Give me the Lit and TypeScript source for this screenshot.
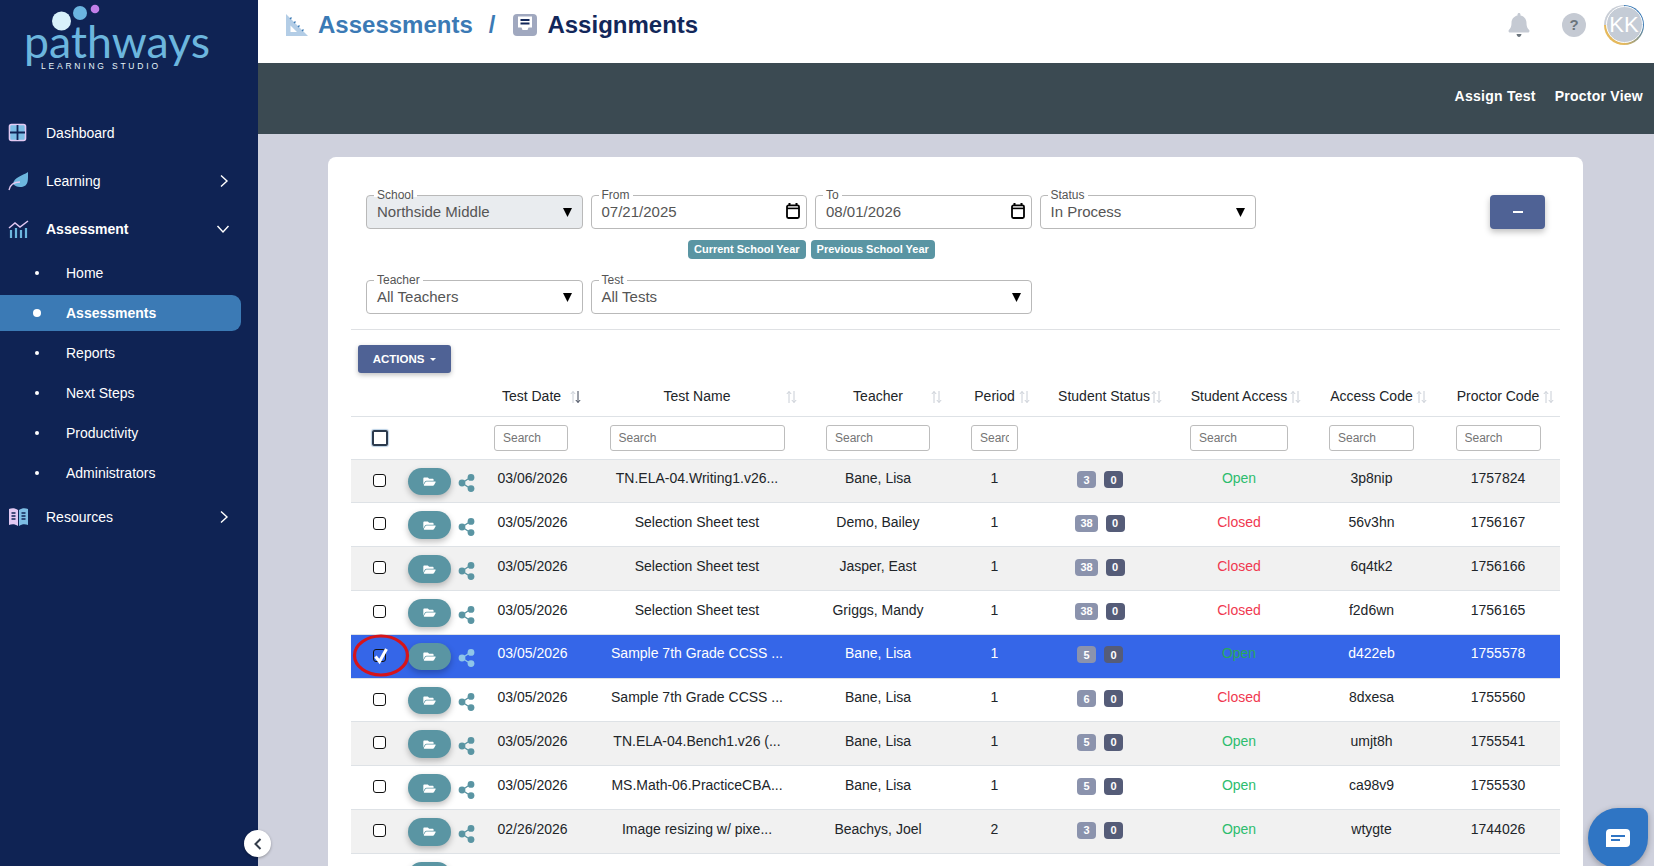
import { LitElement, html, css, svg } from "lit";
import { customElement } from "lit/decorators.js";

interface Row { date: string; name: string; teacher: string; period: string; a: string; access: string; code: string; proctor: string; }
const rows: Row[] = [
  { date: "03/06/2026", name: "TN.ELA-04.Writing1.v26...", teacher: "Bane, Lisa", period: "1", a: "3", access: "Open", code: "3p8nip", proctor: "1757824" },
  { date: "03/05/2026", name: "Selection Sheet test", teacher: "Demo, Bailey", period: "1", a: "38", access: "Closed", code: "56v3hn", proctor: "1756167" },
  { date: "03/05/2026", name: "Selection Sheet test", teacher: "Jasper, East", period: "1", a: "38", access: "Closed", code: "6q4tk2", proctor: "1756166" },
  { date: "03/05/2026", name: "Selection Sheet test", teacher: "Griggs, Mandy", period: "1", a: "38", access: "Closed", code: "f2d6wn", proctor: "1756165" },
  { date: "03/05/2026", name: "Sample 7th Grade CCSS ...", teacher: "Bane, Lisa", period: "1", a: "5", access: "Open", code: "d422eb", proctor: "1755578" },
  { date: "03/05/2026", name: "Sample 7th Grade CCSS ...", teacher: "Bane, Lisa", period: "1", a: "6", access: "Closed", code: "8dxesa", proctor: "1755560" },
  { date: "03/05/2026", name: "TN.ELA-04.Bench1.v26 (...", teacher: "Bane, Lisa", period: "1", a: "5", access: "Open", code: "umjt8h", proctor: "1755541" },
  { date: "03/05/2026", name: "MS.Math-06.PracticeCBA...", teacher: "Bane, Lisa", period: "1", a: "5", access: "Open", code: "ca98v9", proctor: "1755530" },
  { date: "02/26/2026", name: "Image resizing w/ pixe...", teacher: "Beachys, Joel", period: "2", a: "3", access: "Open", code: "wtygte", proctor: "1744026" },
];

const headers = [
  { t: "Test Date", search: 74, right: 9, active: true },
  { t: "Test Name", search: 175, right: 7, active: false },
  { t: "Teacher", search: 104, right: 10, active: false },
  { t: "Period", search: 47, right: 7, active: false },
  { t: "Student Status", search: 0, right: 9, active: false },
  { t: "Student Access", search: 98, right: 6, active: false },
  { t: "Access Code", search: 85, right: 9, active: false },
  { t: "Proctor Code", search: 85, right: 6, active: false },
];

const chevronRight = html`<svg class="chev" width="12" height="14" viewBox="0 0 12 14"><path d="M3 1.500 9 7l-6 5.500" fill="none" stroke="#fff" stroke-width="1.400"/></svg>`;
const chevronDown = html`<svg class="chev" width="14" height="12" viewBox="0 0 14 12"><path d="M1.500 3 7 9l5.500-6" fill="none" stroke="#fff" stroke-width="1.400"/></svg>`;

const icons = {
  dash: html`<svg width="20" height="20" viewBox="0 0 20 20"><rect x="1.500" y="1.500" width="16" height="16" rx="2" fill="#7dbde4" stroke="#e3c9f2" stroke-width="1.600"/><path d="M9.500 2v15M2 9.500h15" stroke="#0f2354" stroke-width="1.800"/></svg>`,
  leaf: html`<svg width="22" height="20" viewBox="0 0 22 20"><path d="M20 1c0 8 1 15-8 15-3 0-5-1-7-3C6 6 14 5 20 1z" fill="#6cb6de"/><path d="M1 19c1-5 4-8 11-8" fill="none" stroke="#e3c9f2" stroke-width="1.300"/></svg>`,
  chart: html`<svg width="22" height="20" viewBox="0 0 22 20"><path d="M1 9l6-5 5 4 8-6" fill="none" stroke="#e3c9f2" stroke-width="1.500"/><path d="M3 11v8M8 9v10M13 11v8M18 9v10" stroke="#6cb6de" stroke-width="2.200"/></svg>`,
  book: html`<svg width="22" height="20" viewBox="0 0 22 20"><path d="M1 2c3-1 6-1 9 1v16c-3-2-6-2-9-1z" fill="#e3c9f2"/><path d="M20 2c-3-1-6-1-9 1v16c3-2 6-2 9-1z" fill="#7dbde4"/><path d="M3.500 6h4M3.500 9h4M3.500 12h4M13.500 6h4M13.500 9h4M13.500 12h4" stroke="#0f2354" stroke-width="1.400"/></svg>`,
};

const folder = html`<svg width="13" height="11" viewBox="0 0 576 512"><path fill="#fff" d="M572.694 292.093L500.27 416.248A63.997 63.997 0 0 1 444.989 448H45.025c-18.523 0-30.064-20.093-20.731-36.093l72.424-124.155A64 64 0 0 1 152 256h399.964c18.523 0 30.064 20.093 20.73 36.093zM152 224h328v-48c0-26.51-21.49-48-48-48H272l-64-64H48C21.49 64 0 85.49 0 112v278.046l69.077-118.418C86.214 242.25 117.989 224 152 224z"/></svg>`;
const share = html`<svg class="share" width="17" height="18" viewBox="0 0 17 18"><path d="M4 9l9-6M4 9l9 6" stroke="currentColor" stroke-width="1.400"/><circle cx="4" cy="9" r="3.400" fill="currentColor"/><circle cx="13" cy="3.400" r="3.400" fill="currentColor"/><circle cx="13" cy="14.600" r="3.400" fill="currentColor"/></svg>`;
const caret = html`<svg class="arrow" width="9" height="9" viewBox="0 0 9 9"><path d="M0 0h9L4.500 9z" fill="#000"/></svg>`;
const calendar = html`<svg class="cal" width="14" height="16" viewBox="0 0 14 16"><path d="M3.500 0v3M10.500 0v3" stroke="#000" stroke-width="2"/><rect x="1" y="2.400" width="12" height="12.600" rx="1.400" fill="none" stroke="#000" stroke-width="1.800"/><path d="M1 5.400h12" stroke="#000" stroke-width="1.600"/></svg>`;
const sortIcon = (active: boolean) => html`<svg style="--dn:${active ? "#3a4354" : "#c9ced6"}" width="11" height="14" viewBox="0 0 11 14"><path d="M3 13V1.500M.8 4 3 1.500 5.200 4" fill="none" stroke="#c9ced6" stroke-width="1"/><path d="M8 1v11.500M5.800 10 8 12.500 10.200 10" fill="none" stroke="var(--dn)" stroke-width="1"/></svg>`;

@customElement("app-root")
export class AppRoot extends LitElement {
  static styles = css`
    :host { display: flex; width: 1654px; height: 866px; overflow: hidden; font-family: "Liberation Sans", Arial, sans-serif; font-size: 14px; color: #212529; background: #cfd1dd; }
    * { box-sizing: border-box; }

    .side { width: 258px; flex: none; background: #0f2354; color: #fff; position: relative; }
    .logo { display: block; }
    .item { height: 48px; display: flex; align-items: center; padding-left: 8px; }
    .item .ic { width: 38px; display: flex; align-items: center; }
    .item .lbl { flex: 1; }
    .item .chev { margin-right: 28px; }
    .item.expanded { font-weight: 700; }
    .subs { display: flex; flex-direction: column; gap: 4px; padding: 2px 17px 2px 0; }
    .sub { height: 36px; display: flex; align-items: center; padding-left: 35px; border-radius: 0 9px 9px 0; }
    .sub i { width: 4px; height: 4px; border-radius: 50%; background: #fff; margin-right: 27px; flex: none; }
    .sub.on { background: #3b7ab5; font-weight: 700; }
    .sub.on i { width: 8px; height: 8px; margin: 0 25px 0 -2px; }
    .collapse { position: absolute; left: 244px; top: 830px; width: 27px; height: 27px; border-radius: 50%; background: #fff; box-shadow: 0 1px 3px rgba(0,0,0,.3); display: flex; align-items: center; justify-content: center; z-index: 3; }

    .main { flex: 1; min-width: 0; display: flex; flex-direction: column; }
    .top { height: 63px; background: #fff; display: flex; align-items: center; padding: 0 10px 14px 27px; flex: none; }
    .crumbs { flex: 1; display: flex; align-items: center; font-size: 24px; font-weight: 700; color: #3b7ab5; }
    .crumbs .c1 { margin-left: 9px; }
    .crumbs .sep { margin: 0 18px 0 16px; }
    .crumbs .c2 { margin-left: 10px; color: #12275a; }
    .topic { display: flex; align-items: center; }
    .help { width: 24px; height: 24px; border-radius: 50%; background: #c5cad3; color: #6c757d; font-weight: 700; font-size: 15px; display: flex; align-items: center; justify-content: center; margin: 0 18px 0 32px; }
    .avatar { width: 40px; height: 40px; border-radius: 50%; padding: 1.500px; background: conic-gradient(#3b7ab5 0 25%, #e5b95c 50% 75%, #c9ced6 75% 100%); }
    .avatar span { display: flex; width: 100%; height: 100%; border-radius: 50%; background: #c5ccd6; border: 1px solid #fff; color: #fff; font-size: 22px; align-items: center; justify-content: center; }
    .bar { height: 71px; background: #3b4a52; flex: none; display: flex; justify-content: flex-end; align-items: center; gap: 19px; padding: 0 11px 5px 0; color: #fff; font-weight: 700; letter-spacing: .25px; }

    .content { flex: 1; padding: 23px 71px 0 70px; min-height: 0; }
    .card { background: #fff; border-radius: 8px 8px 0 0; padding: 38px 23px 0; height: 800px; }
    .filters { display: flex; justify-content: space-between; padding: 0 15px; }
    .grid { display: grid; grid-template-columns: repeat(4, 216.500px); gap: 8px; }
    .grid.second { padding-left: 15px; }
    .field { position: relative; height: 34px; border: 1.500px solid #b9b9b9; border-radius: 4px; display: flex; align-items: center; justify-content: space-between; padding: 0 10px 2px; font-size: 15px; color: #555; background: #fff; }
    .field.dis { background: #e9ecef; }
    .field .arrow { margin-top: 2px; }
    .field .cal { margin-right: -4px; }
    .field label { position: absolute; left: 7px; top: -8.500px; font-size: 12px; line-height: 14px; padding: 0 3px; color: #555; background: linear-gradient(#fff 65%, transparent 65%); }
    .span2 { grid-column: span 2; }
    .chips { display: flex; gap: 5px; margin: 11px 0 21px; padding-left: 337px; }
    .chip { height: 19px; border-radius: 4px; background: #5a95a3; color: #fff; font-size: 11px; font-weight: 700; padding: 0 6px 1px; display: flex; align-items: center; }
    .minus { width: 55px; height: 34px; background: #4f6295; border-radius: 4px; box-shadow: 0 3px 6px rgba(0,0,0,.25); display: flex; align-items: center; justify-content: center; }
    .minus span { width: 10px; height: 2px; background: #fff; }
    hr { margin: 15px 0; border: 0; border-top: 1px solid #dfe1e4; }
    .actions { margin-left: 7px; width: 93px; height: 28px; border-radius: 3px; background: #4f6295; color: #fff; font-size: 11.500px; font-weight: 700; display: flex; align-items: center; justify-content: center; gap: 6px; box-shadow: 0 2px 5px rgba(0,0,0,.25); }
    .actions b { border: 3px solid transparent; border-top-color: #fff; border-bottom: 0; }

    .row { display: grid; grid-template-columns: 56px 79px 104px 214px 148px 85px 134px 136px 129px 124px; position: relative; }
    .head { height: 44px; align-items: center; border-bottom: 1px solid #dee2e6; padding-top: 2px; }
    .hc { position: relative; text-align: center; white-space: nowrap; }
    .hc.date { padding-right: 13px; }
    .sort { position: absolute; top: 2px; display: flex; }
    .searches { height: 42.700px; align-items: center; border-bottom: 1px solid #dee2e6; }
    .searches > div { display: flex; justify-content: center; }
    .searches .date { padding-right: 14px; }
    input[type="text"] { height: 26px; padding: 0 8px; border: 1px solid #bdbdbd; border-radius: 3px; font: 12px "Liberation Sans", Arial, sans-serif; color: #555; background: #fff; outline: none; }
    input::placeholder { color: #757575; opacity: 1; }
    .allbox { width: 16px; height: 16px; border: 2px solid #2b3a4d; border-radius: 2px; box-shadow: 0 0 1px 1px rgba(59,122,181,.35); margin: 1px 0 0 1px; }

    .data { height: 43.800px; border-bottom: 1px solid #dee2e6; }
    .data.alt { background: #f1f1f1; }
    .data.sel { background: #3566e8; color: #fff; --share: #8fc6e8; }
    .cell { padding-top: 9.500px; text-align: center; white-space: nowrap; line-height: 18px; }
    .cell.date { padding-right: 11px; }
    .cell.boxc, .cell.btn { padding-top: 0; }
    .box { display: block; width: 13px; height: 13px; border: 1px solid #111; border-radius: 3px; background: #fff; margin: 14px 0 0 22px; }
    .sel .box { background: transparent; }
    .btn { display: flex; align-items: flex-start; }
    .pill { width: 43px; height: 27.500px; margin: 8px 0 0 1px; border-radius: 14px; background: #5a95a3; box-shadow: 0 3px 6px rgba(0,0,0,.25); display: flex; align-items: center; justify-content: center; }
    .share { color: var(--share, #5a95a3); margin: 14.500px 0 0 7px; flex: none; }
    .badges { padding: 11.500px 8px 0 0; display: flex; justify-content: center; gap: 8px; }
    .badge { height: 17px; min-width: 19px; padding: 0 5px; border-radius: 4px; background: #8b93ad; color: #fff; font-size: 11px; font-weight: 700; display: flex; align-items: center; justify-content: center; }
    .badge.dark { background: #555c78; }
    .acc-open { color: #2dbd6e; }
    .acc-closed { color: #f0384f; }
    .sel .acc-open { color: #2aa85c; }
    .tick { position: absolute; left: 22px; top: 12px; }
    .ring { position: absolute; left: 1px; top: -2px; pointer-events: none; }

    .chat { position: absolute; left: 1588px; top: 808px; width: 60px; height: 60px; border-radius: 50% 8px 50% 50%; background: #2f75c4; box-shadow: 0 2px 6px rgba(0,0,0,.3); display: flex; align-items: center; justify-content: center; }
  `;

  private logo() {
    return html`<svg class="logo" width="258" height="109" viewBox="0 0 258 109">
      <circle cx="61.500" cy="21" r="9.500" fill="#d8f1fb"/>
      <circle cx="80" cy="13" r="7" fill="#6bb5e0"/>
      <circle cx="95" cy="9" r="4.300" fill="#c17fe8"/>
      ${svg`<text x="24" y="58" font-family="Lato" font-size="44" fill="#6cb6de" textLength="186" lengthAdjust="spacingAndGlyphs">pathways</text>
      <text x="41" y="68.500" font-family="'Liberation Sans'" font-size="8.500" fill="#e6f4fa" textLength="117">LEARNING STUDIO</text>`}
    </svg>`;
  }

  render() {
    return html`
      <aside class="side">
        ${this.logo()}
        <div class="item"><span class="ic">${icons.dash}</span><span class="lbl">Dashboard</span></div>
        <div class="item"><span class="ic">${icons.leaf}</span><span class="lbl">Learning</span>${chevronRight}</div>
        <div class="item expanded"><span class="ic">${icons.chart}</span><span class="lbl">Assessment</span>${chevronDown}</div>
        <div class="subs">
          ${["Home", "Assessments", "Reports", "Next Steps", "Productivity", "Administrators"].map(
            (s) => html`<div class="sub ${s === "Assessments" ? "on" : ""}"><i></i>${s}</div>`
          )}
        </div>
        <div class="item"><span class="ic">${icons.book}</span><span class="lbl">Resources</span>${chevronRight}</div>
        <div class="collapse"><svg width="10" height="14" viewBox="0 0 10 14"><path d="M7.500 2 2.500 7l5 5" fill="none" stroke="#333c4a" stroke-width="2"/></svg></div>
      </aside>
      <div class="main">
        <header class="top">
          <div class="crumbs">
            <svg width="24" height="24" viewBox="0 0 24 24"><path fill-rule="evenodd" d="M1 1l22 22H1zM5.500 12.500v6.500h6.500z" fill="#b3cde6"/><path d="M5 6l1.500-1.500M9 10l1.500-1.500M13 14l1.500-1.500M17 18l1.500-1.500" stroke="#3b7ab5" stroke-width="1.400"/></svg>
            <span class="c1">Assessments</span>
            <span class="sep">/</span>
            <svg width="24" height="22" viewBox="0 0 24 22"><rect width="24" height="22" rx="4" fill="#a0a8bf"/><path d="M5 2.500h14v11h-3.500l-1 2.500h-5l-1-2.500H5z" fill="#fff"/><path d="M7.500 6h9M7.500 9.500h9" stroke="#12275a" stroke-width="1.800"/></svg>
            <span class="c2">Assignments</span>
          </div>
          <div class="topic">
            <svg width="22" height="24" viewBox="0 0 448 512"><path fill="#c5cad3" d="M439.390 362.290c-19.320-20.760-55.470-51.990-55.470-154.290 0-77.700-54.480-139.900-127.940-155.160V32c0-17.670-14.320-32-31.980-32s-31.980 14.330-31.980 32v20.840C118.560 68.100 64.080 130.300 64.080 208c0 102.300-36.150 133.530-55.470 154.290-6 6.450-8.660 14.160-8.610 21.710.11 16.400 12.980 32 32.100 32h383.800c19.120 0 32-15.600 32.100-32 .05-7.550-2.610-15.270-8.610-21.710z"/><path fill="#6c757d" d="M170 450h108c-10 40-30 62-54 62s-44-22-54-62z"/></svg>
            <div class="help">?</div>
            <div class="avatar"><span>KK</span></div>
          </div>
        </header>
        <div class="bar"><span>Assign Test</span><span>Proctor View</span></div>
        <div class="content">
          <section class="card">
            <div class="filters">
              <div class="grid">
                <div class="field dis"><label>School</label>Northside Middle ${caret}</div>
                <div class="field"><label>From</label>07/21/2025 ${calendar}</div>
                <div class="field"><label>To</label>08/01/2026 ${calendar}</div>
                <div class="field"><label>Status</label>In Process ${caret}</div>
              </div>
              <div class="minus"><span></span></div>
            </div>
            <div class="chips"><span class="chip">Current School Year</span><span class="chip">Previous School Year</span></div>
            <div class="grid second">
              <div class="field"><label>Teacher</label>All Teachers ${caret}</div>
              <div class="field span2"><label>Test</label>All Tests ${caret}</div>
            </div>
            <hr />
            <div class="actions">ACTIONS <b></b></div>

            <div class="row head">
              <div></div><div></div>
              ${headers.map(
                (h, i) => html`<div class="hc ${i === 0 ? "date" : ""}">${h.t}<span class="sort" style="right:${h.right}px">${sortIcon(h.active)}</span></div>`
              )}
            </div>
            <div class="row searches">
              <div><span class="allbox"></span></div><div></div>
              ${headers.map(
                (h, i) => html`<div class="${i === 0 ? "date" : ""}">${h.search ? html`<input type="text" placeholder="Search" style="width:${h.search}px" />` : ""}</div>`
              )}
            </div>
            ${rows.map((r, i) => this.renderRow(r, i))}
            <div class="row data">
              <div class="cell boxc"><span class="box"></span></div>
              <div class="cell btn"><span class="pill">${folder}</span>${share}</div>
            </div>
          </section>
        </div>
      </div>
      <div class="chat">
        <svg width="24" height="18" viewBox="0 0 24 18"><path d="M4 0h16a4 4 0 0 1 4 4v10a4 4 0 0 1-4 4H0V4a4 4 0 0 1 4-4z" fill="#fff"/><path d="M5 7h14M5 11h9" stroke="#2f75c4" stroke-width="2"/></svg>
      </div>
    `;
  }

  private renderRow(r: Row, i: number) {
    const sel = i === 4;
    const alt = i === 0 || i === 2 || i === 6 || i === 8;
    return html`<div class="row data ${sel ? "sel" : alt ? "alt" : ""}">
      <div class="cell boxc"><span class="box"></span></div>
      <div class="cell btn"><span class="pill">${folder}</span>${share}</div>
      <div class="cell date">${r.date}</div>
      <div class="cell">${r.name}</div>
      <div class="cell">${r.teacher}</div>
      <div class="cell">${r.period}</div>
      <div class="cell badges"><span class="badge">${r.a}</span><span class="badge dark">0</span></div>
      <div class="cell ${r.access === "Open" ? "acc-open" : "acc-closed"}">${r.access}</div>
      <div class="cell">${r.code}</div>
      <div class="cell">${r.proctor}</div>
      ${sel
        ? html`<svg class="tick" width="16" height="18" viewBox="0 0 16 18"><path d="M2.500 9.500l4 5L13.500 2" fill="none" stroke="#fff" stroke-width="3"/></svg>
            <svg class="ring" width="58" height="46" viewBox="0 0 58 46"><ellipse cx="29" cy="22.500" rx="26.500" ry="19.500" fill="none" stroke="#d7141a" stroke-width="3.200"/></svg>`
        : ""}
    </div>`;
  }
}
